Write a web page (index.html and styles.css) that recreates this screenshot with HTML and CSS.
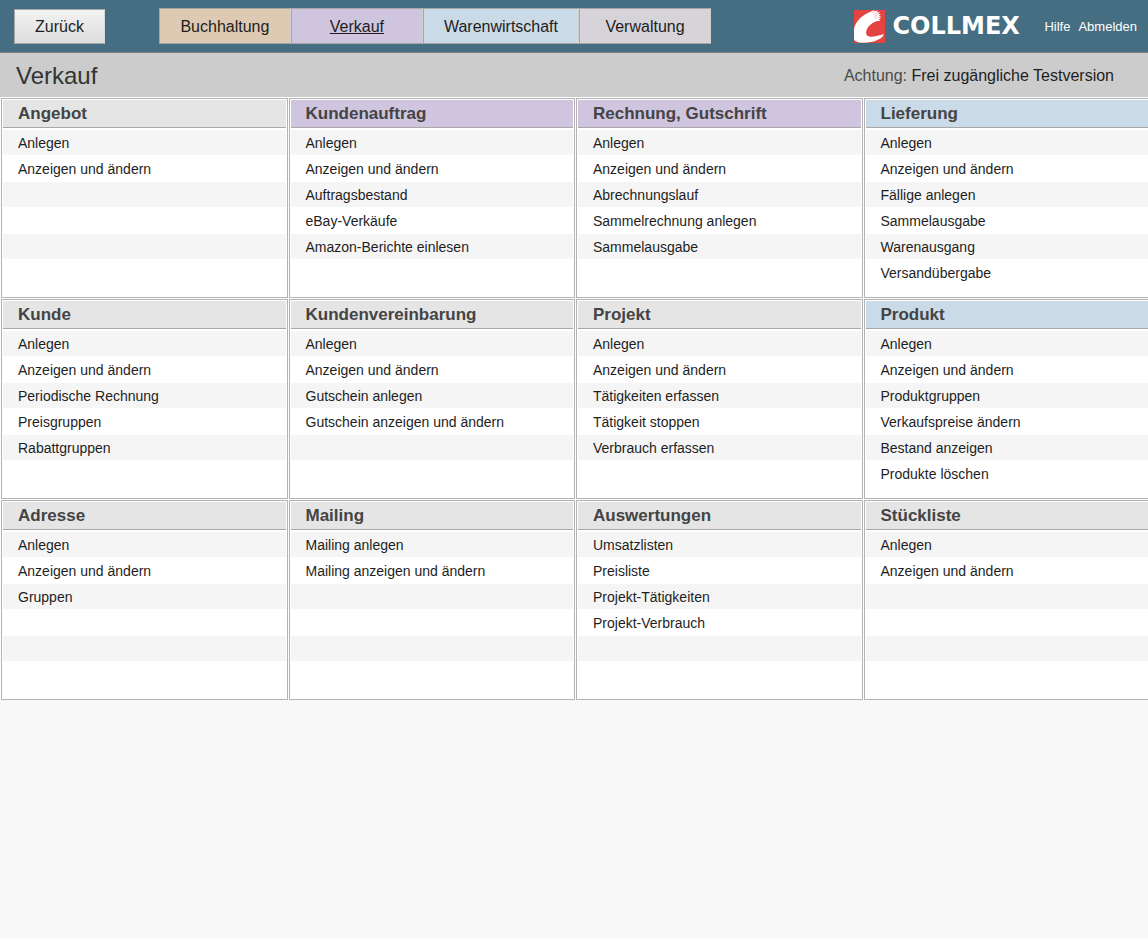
FILE: index.html
```html
<!DOCTYPE html>
<html lang="de">
<head>
<meta charset="utf-8">
<meta name="viewport" content="width=device-width, initial-scale=1">
<title>Verkauf – Collmex</title>
<link rel="stylesheet" href="styles.css">
</head>
<body>
<header class="topbar">
  <button class="back" type="button">Zurück</button>
  <nav class="tabs">
    <a class="tab tab-sand" href="#buchhaltung">Buchhaltung</a>
    <a class="tab tab-violet tab-active" href="#verkauf" aria-current="page">Verkauf</a>
    <a class="tab tab-blue" href="#warenwirtschaft">Warenwirtschaft</a>
    <a class="tab tab-grey" href="#verwaltung">Verwaltung</a>
  </nav>
  <div class="brand">
    <svg class="brand-mark" viewBox="0 0 31 33" aria-hidden="true">
      <rect width="31" height="33" fill="#e54242"/>
      <path fill="#fff" d="M0 19C1 13.500 5 8 11 4.500C14 2.600 17.500 1.200 20.500 0L20 1.300L24 .5L22.500 2.300L26 2L24 4L27 4L24.800 5.800L27.200 6.200L25 7.600L27 8.500L24.800 9.300L26.500 10.800L23.500 11C19 12 14.500 15.500 12.800 19.500C11.200 23.500 12.500 26.500 16.500 26.800C21 27 25.500 25.200 29.500 24.300C30 25.700 27.500 28.200 24 29.800C19 32.200 13 33 8.500 32.800C4.500 32.600 1.500 31.600 0 30Z"/>
      <path fill="none" stroke="#e54242" stroke-width=".3" d="M17.500 3.500L20.500 1.600M19.500 4.600L23 2.600M20 6.500L24.500 4.500M20.500 8.300L25 7"/>
    </svg>
    <span class="brand-name">COLLMEX</span>
  </div>
  <nav class="account">
    <a href="#hilfe">Hilfe</a>
    <a href="#abmelden">Abmelden</a>
  </nav>
</header>
<div class="titlebar">
  <h1 class="page-title">Verkauf</h1>
  <p class="notice">Achtung: <a href="#testversion">Frei zugängliche Testversion</a></p>
</div>
<main class="grid">
  <section class="card">
    <h2 class="card-title">Angebot</h2>
    <ul class="links">
      <li><a href="#">Anlegen</a></li><li><a href="#">Anzeigen und ändern</a></li><li></li><li></li><li></li><li></li>
    </ul>
  </section>
  <section class="card">
    <h2 class="card-title violet">Kundenauftrag</h2>
    <ul class="links">
      <li><a href="#">Anlegen</a></li><li><a href="#">Anzeigen und ändern</a></li><li><a href="#">Auftragsbestand</a></li><li><a href="#">eBay-Verkäufe</a></li><li><a href="#">Amazon-Berichte einlesen</a></li><li></li>
    </ul>
  </section>
  <section class="card">
    <h2 class="card-title violet">Rechnung, Gutschrift</h2>
    <ul class="links">
      <li><a href="#">Anlegen</a></li><li><a href="#">Anzeigen und ändern</a></li><li><a href="#">Abrechnungslauf</a></li><li><a href="#">Sammelrechnung anlegen</a></li><li><a href="#">Sammelausgabe</a></li><li></li>
    </ul>
  </section>
  <section class="card">
    <h2 class="card-title blue">Lieferung</h2>
    <ul class="links">
      <li><a href="#">Anlegen</a></li><li><a href="#">Anzeigen und ändern</a></li><li><a href="#">Fällige anlegen</a></li><li><a href="#">Sammelausgabe</a></li><li><a href="#">Warenausgang</a></li><li><a href="#">Versandübergabe</a></li>
    </ul>
  </section>
  <section class="card">
    <h2 class="card-title">Kunde</h2>
    <ul class="links">
      <li><a href="#">Anlegen</a></li><li><a href="#">Anzeigen und ändern</a></li><li><a href="#">Periodische Rechnung</a></li><li><a href="#">Preisgruppen</a></li><li><a href="#">Rabattgruppen</a></li><li></li>
    </ul>
  </section>
  <section class="card">
    <h2 class="card-title">Kundenvereinbarung</h2>
    <ul class="links">
      <li><a href="#">Anlegen</a></li><li><a href="#">Anzeigen und ändern</a></li><li><a href="#">Gutschein anlegen</a></li><li><a href="#">Gutschein anzeigen und ändern</a></li><li></li><li></li>
    </ul>
  </section>
  <section class="card">
    <h2 class="card-title">Projekt</h2>
    <ul class="links">
      <li><a href="#">Anlegen</a></li><li><a href="#">Anzeigen und ändern</a></li><li><a href="#">Tätigkeiten erfassen</a></li><li><a href="#">Tätigkeit stoppen</a></li><li><a href="#">Verbrauch erfassen</a></li><li></li>
    </ul>
  </section>
  <section class="card">
    <h2 class="card-title blue">Produkt</h2>
    <ul class="links">
      <li><a href="#">Anlegen</a></li><li><a href="#">Anzeigen und ändern</a></li><li><a href="#">Produktgruppen</a></li><li><a href="#">Verkaufspreise ändern</a></li><li><a href="#">Bestand anzeigen</a></li><li><a href="#">Produkte löschen</a></li>
    </ul>
  </section>
  <section class="card">
    <h2 class="card-title">Adresse</h2>
    <ul class="links">
      <li><a href="#">Anlegen</a></li><li><a href="#">Anzeigen und ändern</a></li><li><a href="#">Gruppen</a></li><li></li><li></li><li></li>
    </ul>
  </section>
  <section class="card">
    <h2 class="card-title">Mailing</h2>
    <ul class="links">
      <li><a href="#">Mailing anlegen</a></li><li><a href="#">Mailing anzeigen und ändern</a></li><li></li><li></li><li></li><li></li>
    </ul>
  </section>
  <section class="card">
    <h2 class="card-title">Auswertungen</h2>
    <ul class="links">
      <li><a href="#">Umsatzlisten</a></li><li><a href="#">Preisliste</a></li><li><a href="#">Projekt-Tätigkeiten</a></li><li><a href="#">Projekt-Verbrauch</a></li><li></li><li></li>
    </ul>
  </section>
  <section class="card">
    <h2 class="card-title">Stückliste</h2>
    <ul class="links">
      <li><a href="#">Anlegen</a></li><li><a href="#">Anzeigen und ändern</a></li><li></li><li></li><li></li><li></li>
    </ul>
  </section>
</main>
</body>
</html>
```
FILE: styles.css
```css
* {
  box-sizing: border-box;
}

body {
  margin: 0;
  background: #f8f8f8;
  color: #1e1e1e;
  font: 16px/20px "Liberation Sans", Arial, sans-serif;
  overflow-x: hidden;
}

a {
  color: inherit;
  text-decoration: none;
}

.topbar {
  display: flex;
  align-items: center;
  padding: 8px 11px 8px 14px;
  background: #466e82;
  border-bottom: 1px solid #807c78;
  white-space: nowrap;
}

.back {
  height: 35px;
  margin-right: 54px;
  padding: 1px 20px 0;
  border: 1px solid #a8a8a8;
  border-right-color: #d8d8d8;
  background: linear-gradient(#f2f2f2, #dedede);
  color: inherit;
  font: inherit;
}

.tabs {
  display: flex;
}

.tab {
  min-width: 132px;
  height: 36px;
  padding: 8px 20px 6px;
  border: 1px solid #a6a6a6;
  border-right-color: #d0d0d0;
  text-align: center;
}

.tab-sand {
  background: #decab2;
}

.tab-violet {
  background: #d0c5df;
}

.tab-blue {
  background: #cbdae7;
}

.tab-grey {
  background: #d6d3d9;
}

.tab-active {
  text-decoration: underline;
}

.brand {
  display: flex;
  align-items: center;
  gap: 7px;
  width: 190px;
  margin-left: auto;
}

.brand-mark {
  width: 31px;
  height: 33px;
}

.brand-name {
  color: #fff;
  font: bold 24px/33px "DejaVu Sans", Verdana, sans-serif;
}

.account {
  display: flex;
  gap: 8px;
  padding-top: 1px;
  color: #fff;
  font-size: 13px;
}

.titlebar {
  display: flex;
  align-items: center;
  justify-content: space-between;
  padding: 9px 34px 7px 16px;
  background: #ccc;
  border-bottom: 1px solid #fff;
}

.page-title {
  margin: 0;
  color: #333;
  font-size: 24px;
  font-weight: normal;
  line-height: 28px;
}

.notice {
  margin: 0;
  color: #4a4a4a;
}

.notice a {
  color: #1e1e1e;
}

.grid {
  display: grid;
  grid-template-columns: repeat(4, 1fr);
  gap: 1px;
  margin-right: -2px;
  padding-left: 1px;
  background: #fff;
}

.card {
  padding: 1px 1px 12px;
  border: 1px solid #b3b3b3;
  background: #fff;
}

.card-title {
  margin: 0 0 2px;
  padding: 4px 15px 3px;
  border-bottom: 1px solid #a8a8a8;
  background: #e5e5e5;
  color: #444;
  font-size: 17px;
  line-height: 20px;
}

.violet {
  background: #d0c5df;
}

.blue {
  background: #cbdae7;
}

.links {
  display: grid;
  grid-auto-rows: 25px;
  gap: 1px;
  margin: 0;
  padding: 0;
  list-style: none;
  font-size: 14px;
  line-height: 27px;
}

.links li {
  padding: 0 15px;
}

.links li:nth-child(odd) {
  background: #f5f5f5;
}
```
